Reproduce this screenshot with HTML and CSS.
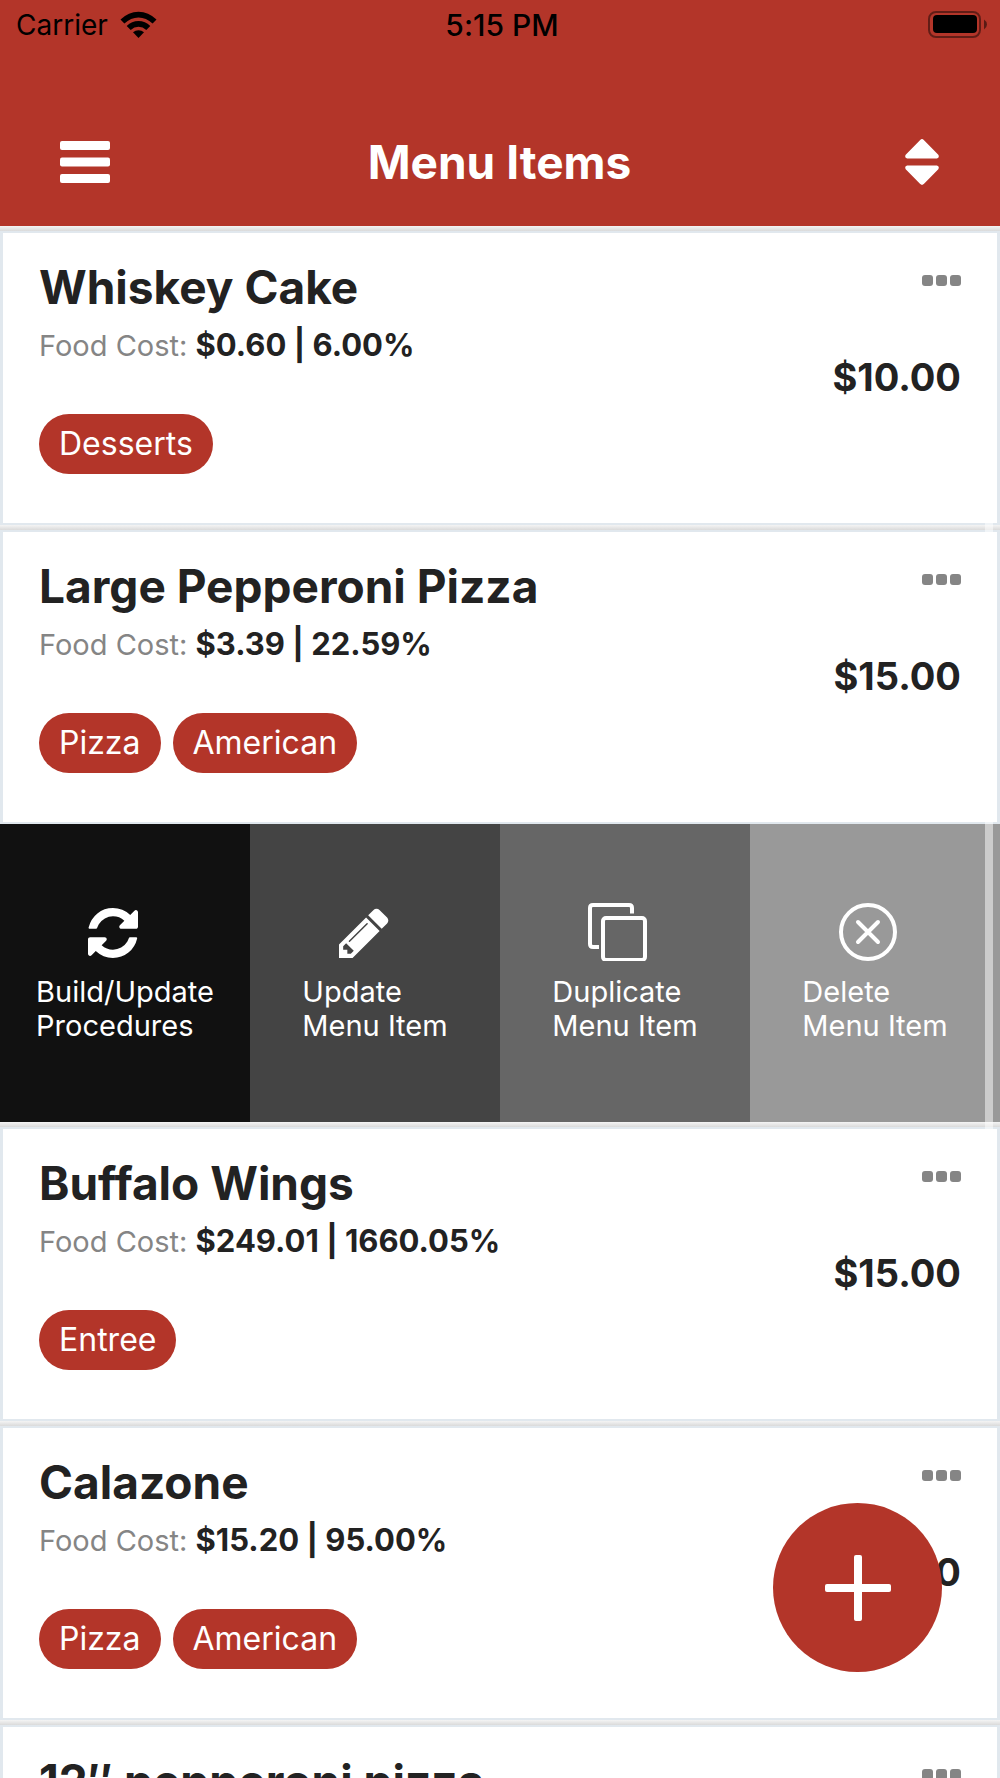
FILE: index.html
```html
<!DOCTYPE html>
<html lang="en">
<head>
<meta charset="utf-8">
<meta name="viewport" content="width=device-width, initial-scale=1">
<title>Menu Items</title>
<link rel="stylesheet" href="styles.css">
</head>
<body>
<svg class="sprite" aria-hidden="true">
  <symbol id="dots" viewBox="0 0 39 11">
    <rect x="0" y="0" width="11" height="11" rx="3"/>
    <rect x="14" y="0" width="11" height="11" rx="3"/>
    <rect x="28" y="0" width="11" height="11" rx="3"/>
  </symbol>
</svg>
<div class="app">
  <header class="header">
    <div class="status">
      <span class="carrier">Carrier
        <svg class="wifi" viewBox="0 0 37 28" aria-hidden="true">
          <path d="M0.500 8.600Q8.500 .7 18.500 .7t18 7.900l-3.900 4Q26.200 6.600 18.500 6.600T4.400 12.600z"/>
          <path d="M6.700 14.900Q11.800 10 18.500 10t11.800 4.900l-4 4q-3.400-3.100-7.800-3.100t-7.800 3.100z"/>
          <path d="M13 21.300q2.400-2.100 5.500-2.100t5.500 2.100l-5.500 5.800z"/>
        </svg>
      </span>
      <span class="time">5:15 PM</span>
      <svg class="battery" viewBox="0 0 60 28" aria-hidden="true">
        <rect x="1" y="1" width="51" height="25" rx="7" fill="none" stroke="#000" stroke-opacity=".45" stroke-width="2"/>
        <rect x="5" y="4" width="44" height="18" rx="4"/>
        <path d="M56 8.500q3 2 3 5t-3 5z" fill-opacity=".5"/>
      </svg>
    </div>
    <div class="nav">
      <button class="icon-button" type="button" aria-label="Open menu">
        <svg class="bars" viewBox="0 0 50 42"><rect width="50" height="9" rx="2"/><rect y="16.500" width="50" height="9" rx="2"/><rect y="33" width="50" height="9" rx="2"/></svg>
      </button>
      <h1 class="nav-title">Menu Items</h1>
      <button class="icon-button nav-end" type="button" aria-label="Sort">
        <svg class="sort" viewBox="0 0 34 46"><path d="M15.200.9q1.800-1.600 3.600 0L33.300 15.800q1.500 2.700-1.400 3.700H2.100Q-.8 18.500.7 15.800zM15.200 45.100q1.800 1.600 3.600 0L33.300 30.200q1.500-2.700-1.400-3.700H2.100q-2.900 1-1.400 3.700z"/></svg>
      </button>
    </div>
  </header>

  <main class="content">
    <ul class="list">
      <li class="row">
        <article class="card">
          <div class="details">
            <h2 class="name">Whiskey Cake</h2>
            <p class="cost">Food Cost: <strong>$0.60 | 6.00%</strong></p>
            <div class="tags"><span class="tag">Desserts</span></div>
          </div>
          <div class="side">
            <button class="more" type="button" aria-label="More options"><svg class="dots"><use href="#dots"/></svg></button>
            <span class="price">$10.00</span>
          </div>
        </article>
      </li>
      <li class="row">
        <article class="card">
          <div class="details">
            <h2 class="name">Large Pepperoni Pizza</h2>
            <p class="cost">Food Cost: <strong>$3.39 | 22.59%</strong></p>
            <div class="tags"><span class="tag">Pizza</span><span class="tag">American</span></div>
          </div>
          <div class="side">
            <button class="more" type="button" aria-label="More options"><svg class="dots"><use href="#dots"/></svg></button>
            <span class="price">$15.00</span>
          </div>
        </article>
      </li>
      <li class="actions">
        <button class="action build" type="button">
          <svg class="action-icon" viewBox="0 0 75 58"><svg x="0" y="5" width="50" height="50" viewBox="0 0 1536 1536"><path d="M1511 928q0 5-1 7-64 268-268 434.500t-478 166.500q-146 0-282.500-55t-243.500-157l-129 129q-19 19-45 19t-45-19-19-45v-448q0-26 19-45t45-19h448q26 0 45 19t19 45-19 45l-137 137q71 66 161 102t187 36q134 0 250-65t186-179q11-17 53-117 8-23 30-23h192q13 0 22.500 9.500t9.500 22.500zm25-800v448q0 26-19 45t-45 19h-448q-26 0-45-19t-19-45 19-45l138-138q-148-137-349-137-134 0-250 65t-186 179q-11 17-53 117-8 23-30 23h-199q-13 0-22.500-9.500t-9.500-22.500v-7q65-268 270-434.500t480-166.500q146 0 284 55.500t245 156.500l130-129q19-19 45-19t45 19 19 45z"/></svg></svg>
          <span class="action-label">Build/Update<br>Procedures</span>
        </button>
        <button class="action update" type="button">
          <svg class="action-icon" viewBox="0 0 75 58"><svg x="1" y="5" width="50" height="50" viewBox="128 128 1536 1536"><path d="M491 1536l91-91-235-235-91 91v107h128v128h107zm523-928q0-22-22-22-10 0-17 7l-542 542q-7 7-7 17 0 22 22 22 10 0 17-7l542-542q7-7 7-17zm-54-192l416 416-832 832h-416v-416zm683 96q0 53-37 90l-166 166-416-416 166-165q36-38 90-38 53 0 91 38l235 234q37 39 37 91z"/></svg></svg>
          <span class="action-label">Update<br>Menu Item</span>
        </button>
        <button class="action duplicate" type="button">
          <svg class="action-icon line" viewBox="0 0 75 58"><path d="M44 10.500V5q0-3-3-3H5Q2 2 2 5v36q0 3 3 3h6"/><rect x="15" y="15" width="42" height="42" rx="3"/></svg>
          <span class="action-label">Duplicate<br>Menu Item</span>
        </button>
        <button class="action delete" type="button">
          <svg class="action-icon line" viewBox="0 0 75 58"><circle cx="30" cy="29" r="27"/><path d="M20 19l20 20M40 19L20 39" stroke-linecap="round"/></svg>
          <span class="action-label">Delete<br>Menu Item</span>
        </button>
      </li>
      <li class="row">
        <article class="card">
          <div class="details">
            <h2 class="name">Buffalo Wings</h2>
            <p class="cost">Food Cost: <strong>$249.01 | 1660.05%</strong></p>
            <div class="tags"><span class="tag">Entree</span></div>
          </div>
          <div class="side">
            <button class="more" type="button" aria-label="More options"><svg class="dots"><use href="#dots"/></svg></button>
            <span class="price">$15.00</span>
          </div>
        </article>
      </li>
      <li class="row">
        <article class="card">
          <div class="details">
            <h2 class="name">Calazone</h2>
            <p class="cost">Food Cost: <strong>$15.20 | 95.00%</strong></p>
            <div class="tags"><span class="tag">Pizza</span><span class="tag">American</span></div>
          </div>
          <div class="side">
            <button class="more" type="button" aria-label="More options"><svg class="dots"><use href="#dots"/></svg></button>
            <span class="price">$16.00</span>
          </div>
        </article>
      </li>
      <li class="row">
        <article class="card">
          <div class="details">
            <h2 class="name">12″ pepperoni pizza</h2>
          </div>
          <div class="side">
            <button class="more" type="button" aria-label="More options"><svg class="dots"><use href="#dots"/></svg></button>
          </div>
        </article>
      </li>
    </ul>
    <div class="scroll-thumb"></div>
  </main>

  <button class="fab" type="button" aria-label="Add menu item">
    <svg class="plus" viewBox="0 0 66 66"><rect x="29" width="8" height="66" rx="2"/><rect y="29" width="66" height="8" rx="2"/></svg>
  </button>
</div>
</body>
</html>
```
FILE: styles.css
```css
* {
  box-sizing: border-box;
}

body {
  margin: 0;
  font-family: Inter, "Liberation Sans", sans-serif;
  font-variant-ligatures: none;
  color: #222;
  background: #fff;
}

h1, h2, p, ul {
  margin: 0;
  padding: 0;
}

button {
  padding: 0;
  border: 0;
  background: none;
  font: inherit;
  color: inherit;
}

svg {
  display: block;
}

.sprite {
  display: none;
}

.app {
  position: relative;
  display: flex;
  flex-direction: column;
  height: 100vh;
  overflow: hidden;
}

/* Header */
.header {
  flex: none;
  background: #b33529;
}

.status {
  display: grid;
  grid-template-columns: 1fr auto 1fr;
  align-items: center;
  height: 50px;
  padding: 0 12px 0 16px;
  font-size: 28px;
  color: #000;
}

.carrier {
  display: flex;
  align-items: center;
  gap: 12px;
}

.wifi {
  width: 37px;
  height: 28px;
}

.time {
  font-size: 30px;
  font-weight: 500;
}

.battery {
  width: 60px;
  height: 28px;
  justify-self: end;
}

.nav {
  display: grid;
  grid-template-columns: 1fr auto 1fr;
  align-items: center;
  height: 176px;
  padding: 47px 61px 0 60px;
  color: #fff;
}

.icon-button {
  justify-self: start;
  fill: currentColor;
}

.nav-end {
  justify-self: end;
}

.bars {
  width: 50px;
  height: 42px;
}

.sort {
  width: 34px;
  height: 46px;
}

.nav-title {
  font-size: 46px;
  line-height: 56px;
  font-weight: 700;
}

/* Item list */
.content {
  position: relative;
  flex: 1;
  min-height: 0;
}

.list {
  list-style: none;
}

.row {
  padding-top: 5px;
  background: linear-gradient(#f4f4f4, #dadada 5px);
}

.card {
  display: flex;
  justify-content: space-between;
  min-height: 294px;
  padding: 26px 36px 0;
  border: 3px solid #e1e8ee;
  border-width: 2px 3px;
  background: #fff;
}

.name {
  font-size: 46px;
  line-height: 56px;
  font-weight: 700;
}

.cost {
  margin-top: 13px;
  font-size: 29px;
  line-height: 34px;
  color: #858585;
}

.cost strong {
  font-size: 31px;
  font-weight: 700;
  color: #222;
}

.tags {
  display: flex;
  gap: 12px;
  margin-top: 51px;
}

.tag {
  height: 60px;
  padding: 0 20px;
  border-radius: 30px;
  background: #b33529;
  font-size: 32px;
  line-height: 60px;
  color: #fff;
}

.side {
  display: flex;
  flex-direction: column;
  align-items: flex-end;
  padding-top: 16px;
}

.dots {
  width: 39px;
  height: 11px;
  fill: #858585;
}

.price {
  margin-top: 68px;
  font-size: 38px;
  line-height: 46px;
  font-weight: 700;
}

/* Revealed swipe actions */
.actions {
  display: grid;
  grid-template-columns: repeat(4, 1fr);
  height: 298px;
}

.action {
  display: flex;
  flex-direction: column;
  align-items: center;
  padding-top: 79px;
  color: #fff;
  text-align: left;
}

.action-icon {
  width: 75px;
  height: 58px;
  fill: currentColor;
}

.line {
  fill: none;
  stroke: currentColor;
  stroke-width: 4;
}

.action-label {
  margin-top: 14px;
  font-size: 29px;
  line-height: 34px;
}

.build { background: #111; }
.update { background: #444; }
.duplicate { background: #666; }
.delete { background: #999; }

/* Overlays */
.scroll-thumb {
  position: absolute;
  top: 296px;
  right: 7px;
  width: 8px;
  height: 608px;
  background: rgba(255, 255, 255, .5);
}

.fab {
  position: absolute;
  right: 58px;
  bottom: 106px;
  display: grid;
  place-items: center;
  width: 169px;
  height: 169px;
  border-radius: 50%;
  background: #b33529;
}

.plus {
  width: 66px;
  height: 66px;
  fill: #fff;
}
```
